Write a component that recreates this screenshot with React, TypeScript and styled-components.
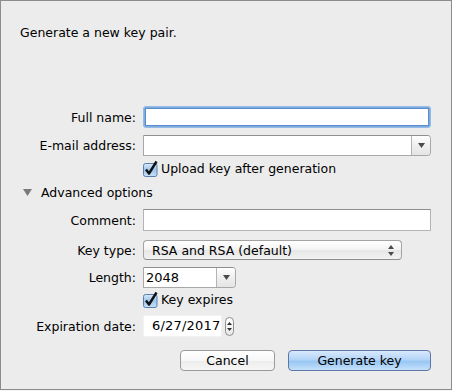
import React from "react";
import styled, { createGlobalStyle } from "styled-components";

const GlobalStyle = createGlobalStyle`
  html, body {
    margin: 0;
    padding: 0;
    background: #f4f4f4;
  }
  body {
    font-family: "DejaVu Sans", "Liberation Sans", sans-serif;
    font-size: 12.5px;
    color: #000;
  }
`;

const Window = styled.div`
  box-sizing: border-box;
  width: 452px;
  height: 390px;
  border: 1px solid #8c8c8c;
  background: #ececec;
  display: flex;
  flex-direction: column;
`;

const Intro = styled.div`
  margin: 24px 0 0 19px;
  line-height: 15px;
`;

const Form = styled.div`
  display: flex;
  flex-direction: column;
  margin-top: 66px;
  padding-right: 20px;
`;

const Row = styled.div<{ $top?: number; $height: number }>`
  display: flex;
  align-items: center;
  gap: 7px;
  margin-top: ${(p) => p.$top ?? 0}px;
  height: ${(p) => p.$height}px;
`;

const Label = styled.div`
  width: 135px;
  flex: none;
  text-align: right;
  line-height: 15px;
`;

const TextField = styled.div`
  box-sizing: border-box;
  height: 22px;
  flex: 1;
  background: #fff;
  border: 1px solid #b4b4b4;
  border-top-color: #8e8e8e;
`;

const FocusRing = styled.div`
  box-sizing: border-box;
  flex: 1;
  height: 22px;
  padding: 2px;
  border-radius: 4px;
  background: #80abdf;
  box-shadow: inset 0 0 0 1px #94bbe7;
`;

const FocusInner = styled.div`
  box-sizing: border-box;
  height: 100%;
  background: #fff;
  border: 1px solid #5b8ccc;
`;

const Combo = styled.div<{ $width?: number }>`
  box-sizing: border-box;
  display: flex;
  height: 21px;
  flex: ${(p) => (p.$width ? "none" : "1")};
  width: ${(p) => (p.$width ? `${p.$width}px` : "auto")};
  border: 1px solid #a8a8a8;
  border-top-color: #8e8e8e;
  border-radius: 0 4px 4px 0;
  background: #fff;
`;

const ComboText = styled.div`
  flex: 1;
  padding-left: 2px;
  line-height: 19px;
  font-size: 13px;
`;

const ComboButton = styled.div`
  width: 18px;
  flex: none;
  border-left: 1px solid #b4b4b4;
  border-radius: 0 3px 3px 0;
  background: linear-gradient(#ffffff, #efefef 50%, #e4e4e4);
  display: flex;
  align-items: center;
  justify-content: center;
`;

const Popup = styled.div`
  box-sizing: border-box;
  width: 259px;
  height: 20px;
  display: flex;
  align-items: center;
  padding: 0 7px 0 8px;
  border: 1px solid #a3a3a3;
  border-bottom-color: #8d8d8d;
  border-radius: 4px;
  background: linear-gradient(#ffffff, #f3f3f3 50%, #e6e6e6 51%, #f2f2f2);
  line-height: 15px;
`;

const PopupText = styled.div`
  flex: 1;
`;

const CheckRow = styled.label`
  display: flex;
  align-items: center;
  gap: 3px;
  margin-left: 142px;
  line-height: 15px;
`;

const Disclosure = styled.div`
  display: flex;
  align-items: center;
  gap: 9px;
  padding-left: 22px;
  line-height: 15px;
`;

const DateField = styled.div`
  box-sizing: border-box;
  width: 79px;
  height: 22px;
  background: #fff;
  border: 1px solid #f2f2f2;
  overflow: hidden;
  white-space: nowrap;
  padding-left: 8px;
  line-height: 20px;
  font-size: 13px;
  letter-spacing: 0.2px;
`;

const Stepper = styled.div`
  box-sizing: border-box;
  width: 9px;
  height: 19px;
  margin-left: -4px;
  border: 1px solid #8f8f8f;
  border-radius: 5px;
  background: linear-gradient(#ffffff, #e8e8e8);
  display: flex;
  flex-direction: column;
  align-items: center;
  justify-content: center;
  gap: 3px;
`;

const Buttons = styled.div`
  display: flex;
  justify-content: flex-end;
  gap: 13px;
  margin-top: 13px;
  padding-right: 20px;
`;

const Button = styled.button<{ $primary?: boolean; $width: number }>`
  box-sizing: border-box;
  width: ${(p) => p.$width}px;
  height: 21px;
  padding: 0;
  font-family: inherit;
  font-size: 12.5px;
  color: #000;
  border-radius: 4px;
  border: 1px solid ${(p) => (p.$primary ? "#5f77a8" : "#9a9a9a")};
  background: ${(p) =>
    p.$primary
      ? "linear-gradient(#d7e8fb, #b4d5f7 45%, #99c6f2 55%, #c4e1fb)"
      : "linear-gradient(#ffffff, #f7f7f7 50%, #ececec 51%, #f6f6f6)"};
`;

const DownArrow = () => (
  <svg width="7" height="5" viewBox="0 0 7 5">
    <path d="M0 0H7L3.5 5Z" fill="#4a4a4a" />
  </svg>
);

const UpDown = () => (
  <svg width="6" height="11" viewBox="0 0 6 11">
    <path d="M0 4L3 0L6 4Z" fill="#4a4a4a" />
    <path d="M0 7H6L3 11Z" fill="#4a4a4a" />
  </svg>
);

const Checkbox = () => (
  <svg width="15" height="16" viewBox="0 0 15 16" style={{ overflow: "visible" }}>
    <defs>
      <linearGradient id="cb" x1="0" y1="0" x2="0" y2="1">
        <stop offset="0" stopColor="#d9e9fa" />
        <stop offset="0.5" stopColor="#9fc5ee" />
        <stop offset="1" stopColor="#c8e0f8" />
      </linearGradient>
    </defs>
    <rect x="0.5" y="2.5" width="13.5" height="13" rx="2" fill="url(#cb)" stroke="#5a7fae" />
    <path d="M3 8.5L6 12.5L13.5 0.5" fill="none" stroke="#111" strokeWidth="2.4" strokeLinejoin="round" />
  </svg>
);

const Triangle = () => (
  <svg width="9" height="7" viewBox="0 0 9 7">
    <path d="M0 0H9L4.5 7Z" fill="#7a7a7a" />
  </svg>
);

export default function App() {
  return (
    <>
      <GlobalStyle />
      <Window>
        <Intro>Generate a new key pair.</Intro>
        <Form>
          <Row $height={22}>
            <Label>Full name:</Label>
            <FocusRing>
              <FocusInner />
            </FocusRing>
          </Row>
          <Row $top={7} $height={21}>
            <Label>E-mail address:</Label>
            <Combo>
              <ComboText />
              <ComboButton>
                <DownArrow />
              </ComboButton>
            </Combo>
          </Row>
          <Row $top={5} $height={15}>
            <CheckRow>
              <Checkbox />
              Upload key after generation
            </CheckRow>
          </Row>
          <Row $top={9} $height={15}>
            <Disclosure>
              <Triangle />
              Advanced options
            </Disclosure>
          </Row>
          <Row $top={9} $height={22}>
            <Label>Comment:</Label>
            <TextField />
          </Row>
          <Row $top={9} $height={20}>
            <Label>Key type:</Label>
            <Popup>
              <PopupText>RSA and RSA (default)</PopupText>
              <UpDown />
            </Popup>
          </Row>
          <Row $top={7} $height={20}>
            <Label>Length:</Label>
            <Combo $width={93}>
              <ComboText>2048</ComboText>
              <ComboButton>
                <DownArrow />
              </ComboButton>
            </Combo>
          </Row>
          <Row $top={5} $height={15}>
            <CheckRow>
              <Checkbox />
              Key expires
            </CheckRow>
          </Row>
          <Row $top={8} $height={22}>
            <Label>Expiration date:</Label>
            <DateField>6/27/2017</DateField>
            <Stepper>
              <svg width="5" height="3" viewBox="0 0 5 3">
                <path d="M0 3L2.5 0L5 3Z" fill="#333" />
              </svg>
              <svg width="5" height="3" viewBox="0 0 5 3">
                <path d="M0 0H5L2.5 3Z" fill="#333" />
              </svg>
            </Stepper>
          </Row>
        </Form>
        <Buttons>
          <Button $width={95}>Cancel</Button>
          <Button $primary $width={143}>
            Generate key
          </Button>
        </Buttons>
      </Window>
    </>
  );
}
